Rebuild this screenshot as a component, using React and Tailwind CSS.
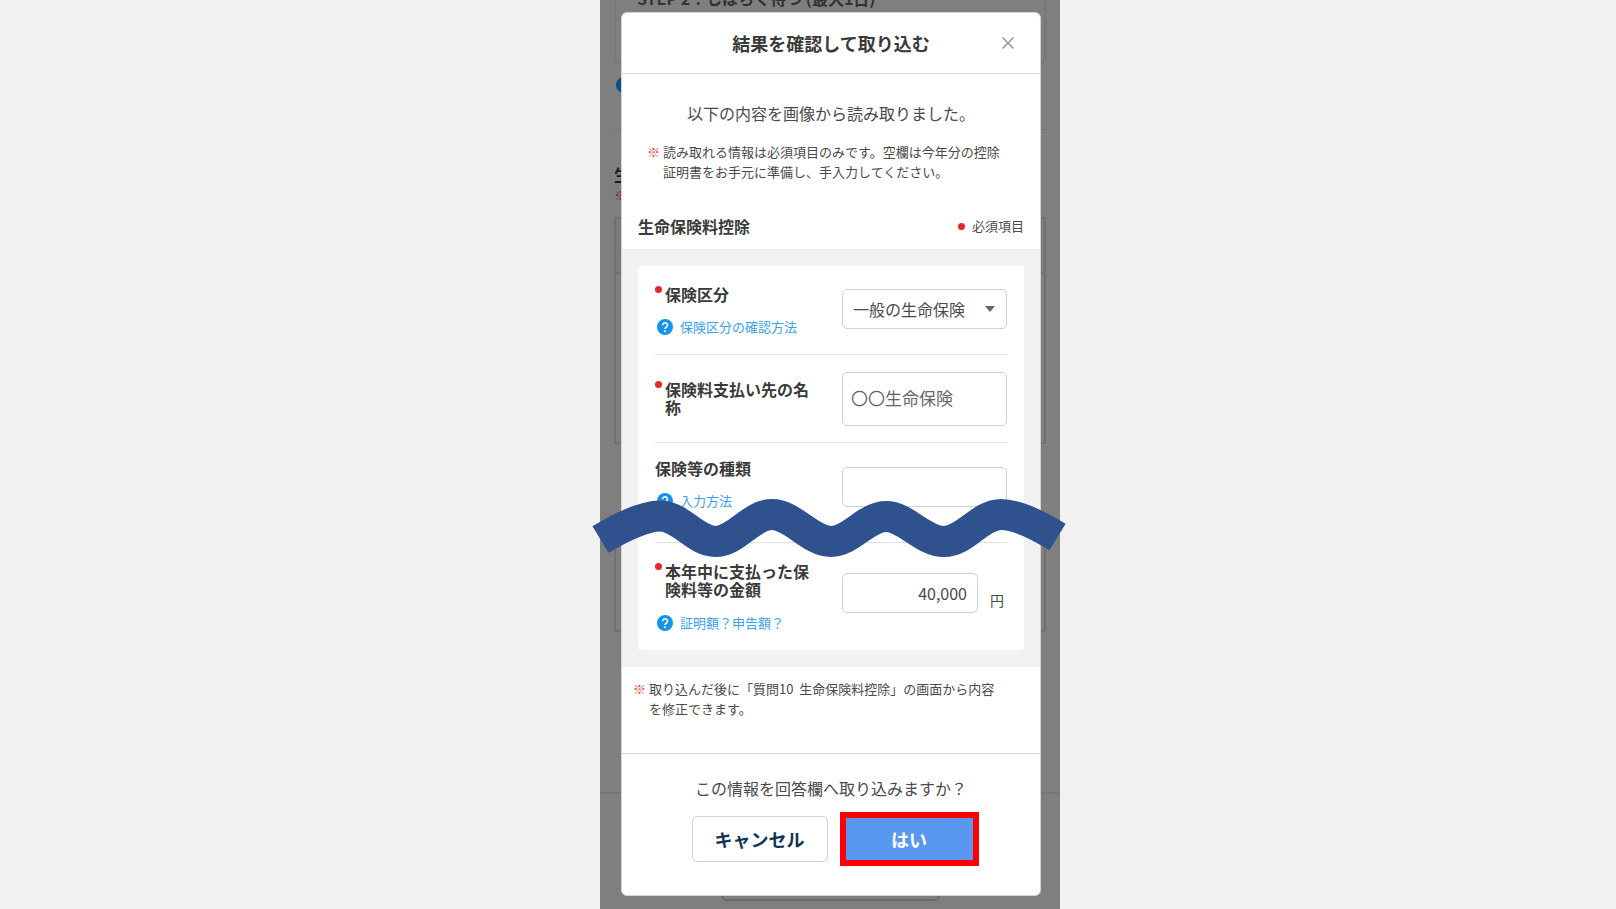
import React from 'react';
import { X } from 'lucide-react';

const HelpLink = ({ children }) => (
  <a href="#help" className="flex items-center gap-[7px] pl-[2px] text-[13px] leading-5 text-[#3aa0ea]">
    <svg width="16" height="16" viewBox="0 0 16 16" aria-hidden="true">
      <circle cx="8" cy="8" r="8" fill="#1593e8" />
      <path
        d="M5.6 6.2a2.4 2.4 0 1 1 3.9 1.9c-.9.6-1.5.9-1.5 2"
        fill="none"
        stroke="#fff"
        strokeWidth="1.6"
      />
      <circle cx="8" cy="12.3" r="1" fill="#fff" />
    </svg>
    {children}
  </a>
);

const FieldLabel = ({ htmlFor, required, children }) => (
  <label htmlFor={htmlFor} className="flex items-start gap-[3px] text-base leading-[18px] font-bold text-[#3a3a3a]">
    {required && <span className="mt-px size-[7px] shrink-0 rounded-full bg-[#e5262b]" />}
    <span className="flex-1">{children}</span>
  </label>
);

const Note = ({ children }) => (
  <p className="flex gap-[3px] text-[13px] leading-5 text-[#4a4a4a]">
    <span className="text-[#ff3b3b]">※</span>
    <span>{children}</span>
  </p>
);

const fieldBox = 'rounded-[5px] border border-[#d0d0d0] bg-white';

// Page behind the dimmed overlay
const Backdrop = () => (
  <div aria-hidden="true" className="absolute inset-0 overflow-hidden bg-[#7f7f7f] px-[14px]">
    <div className="flow-root h-16 rounded-b-[5px] border-2 border-t-0 border-[#787878] px-[21px]">
      <p className="-mt-[14px] text-base leading-6 font-bold text-[#333]">STEP 2：しばらく待つ (最大1日)</p>
    </div>
    <div className="mt-[13px] ml-[2px] size-4 rounded-full bg-[#0b4f80]" />
    <div className="mt-9 border-t border-[#747474]" />
    <p className="mt-8 text-base leading-6 font-bold text-[#1c1c1c]">生</p>
    <p className="text-[13px] leading-[18px] text-[#8c2025]">※</p>
    <div className="mt-[13px] h-[227px] border-2 border-[#707070]">
      <div className="h-[55px] border-b-2 border-[#707070] bg-[#7a7a7a]" />
    </div>
    <div className="mt-[76px] h-[112px] border-2 border-t-0 border-[#707070]" />
    <div className="-mx-[14px] mt-[160px] border-t-2 border-[#767676]" />
    <div className="mx-auto mt-[60px] h-[47px] w-[219px] rounded-[6px] border-2 border-[#6a6a6a]" />
  </div>
);

const App = () => {
  return (
    <div className="min-h-screen bg-[#f1f1f1] pl-11 font-['Noto_Sans_CJK_JP',sans-serif]">
      <main className="relative mx-auto min-h-screen w-full max-w-[460px] pt-3 pr-[19px] pb-[13px] pl-[21px]">
        <Backdrop />

        <section
          role="dialog"
          aria-labelledby="dialog-title"
          className="relative w-full rounded-[6px] border border-[#d4d4d4] bg-white"
        >
          <header className="relative flex h-[61px] items-center justify-center border-b border-[#dedede]">
            <h1 id="dialog-title" className="text-lg leading-6 font-bold text-[#3a3a3a]">結果を確認して取り込む</h1>
            <button type="button" aria-label="閉じる" className="absolute top-5 right-[22px] text-[#999]">
              <X size={20} strokeWidth={2} />
            </button>
          </header>

          <div className="px-[25px] pt-[27px]">
            <p className="text-center text-base leading-6 text-[#4a4a4a]">以下の内容を画像から読み取りました。</p>
            <div className="pt-[17px]">
              <Note>
                読み取れる情報は必須項目のみです。空欄は今年分の控除
                <br />
                証明書をお手元に準備し、手入力してください。
              </Note>
            </div>
          </div>

          <div className="flex items-center justify-between px-4 pt-8 pb-[11px]">
            <h2 className="text-base leading-6 font-bold text-[#3a3a3a]">生命保険料控除</h2>
            <p className="flex items-center gap-[7px] text-[13px] leading-5 text-[#4a4a4a]">
              <span className="size-[7px] rounded-full bg-[#e5262b]" />
              必須項目
            </p>
          </div>

          <form className="bg-[#f2f2f2] px-4 py-[17px]">
            <div className="rounded-[4px] bg-white px-[17px]">
              <div className="flex justify-between border-b border-[#dfdfdf] pt-[19px] pb-[17px]">
                <div className="flex flex-col gap-[14px]">
                  <FieldLabel htmlFor="category" required>保険区分</FieldLabel>
                  <HelpLink>保険区分の確認方法</HelpLink>
                </div>
                <div className="relative mt-1 h-10 w-[165px]">
                  <select id="category" className={`${fieldBox} h-10 w-full appearance-none pl-[10px] text-base text-[#4a4a4a]`}>
                    <option>一般の生命保険</option>
                  </select>
                  <svg className="pointer-events-none absolute top-[17px] right-3" width="10" height="6" viewBox="0 0 10 6">
                    <path d="M0 0h10L5 6z" fill="#666" />
                  </svg>
                </div>
              </div>

              <div className="flex items-center justify-between border-b border-[#dfdfdf] pt-[17px] pb-4">
                <div className="w-[155px] pb-[2px]">
                  <FieldLabel htmlFor="payee" required>保険料支払い先の名称</FieldLabel>
                </div>
                <input
                  id="payee"
                  defaultValue="〇〇生命保険"
                  className={`${fieldBox} h-[54px] w-[165px] px-2 pb-1 text-[17px] text-[#666]`}
                />
              </div>

              <div className="flex items-start justify-between border-b border-[#dfdfdf] pt-4 pb-[31px]">
                <div className="flex flex-col gap-[14px]">
                  <FieldLabel htmlFor="kind">保険等の種類</FieldLabel>
                  <HelpLink>入力方法</HelpLink>
                </div>
                <input id="kind" className={`${fieldBox} mt-2 h-10 w-[165px] px-2 text-base text-[#4a4a4a]`} />
              </div>

              <div className="flex justify-between pt-[19px] pb-[17px]">
                <div className="flex w-[155px] flex-col gap-[15px]">
                  <FieldLabel htmlFor="amount" required>本年中に支払った保険料等の金額</FieldLabel>
                  <HelpLink>証明額？申告額？</HelpLink>
                </div>
                <div className="mt-[11px] flex w-[165px] items-start justify-between pr-[3px]">
                  <input
                    id="amount"
                    defaultValue="40,000"
                    className={`${fieldBox} h-10 w-[136px] px-[10px] text-right text-base text-[#4a4a4a]`}
                  />
                  <span className="mt-[15px] text-sm leading-6 text-[#4a4a4a]">円</span>
                </div>
              </div>
            </div>
          </form>

          <div className="px-[11px] pt-3 pb-[34px]">
            <Note>
              取り込んだ後に「質問10&nbsp; 生命保険料控除」の画面から内容
              <br />
              を修正できます。
            </Note>
          </div>

          <footer className="border-t border-[#d4d4d4] pt-[22px] pb-[29px]">
            <p className="text-center text-base leading-6 text-[#4a4a4a]">この情報を回答欄へ取り込みますか？</p>
            <div className="mt-3 flex items-center justify-center gap-3 pl-2">
              <button type="button" className="h-[46px] w-[136px] rounded-[5px] border border-[#d0d0d0] bg-white text-lg font-bold text-[#0f3553]">
                キャンセル
              </button>
              <button type="button" className="h-[54px] w-[139px] border-[6px] border-[#ff0000] bg-[#5898f0] text-lg font-bold text-white">
                はい
              </button>
            </div>
          </footer>
        </section>

        {/* Wave marking the omitted part of the form */}
        <svg
          className="pointer-events-none absolute top-[490px] left-[-8px]"
          width="474"
          height="76"
          viewBox="0 0 474 76"
          aria-hidden="true"
        >
          <path
            d="M8.500 49.500C34 34 56 26 68 26C89 26 103 51.500 123.500 51.500C144 51.500 159 24.500 180 24.500C201 24.500 218 51.500 239 51.500C259 51.500 274 26.500 294 26.500C314 26.500 331 51.500 352 51.500C373 51.500 388 24.500 409 24.500C422 24.500 441 32 465.500 47"
            fill="none"
            stroke="#2f528f"
            strokeWidth="31"
          />
        </svg>
      </main>
    </div>
  );
};

export default App;
